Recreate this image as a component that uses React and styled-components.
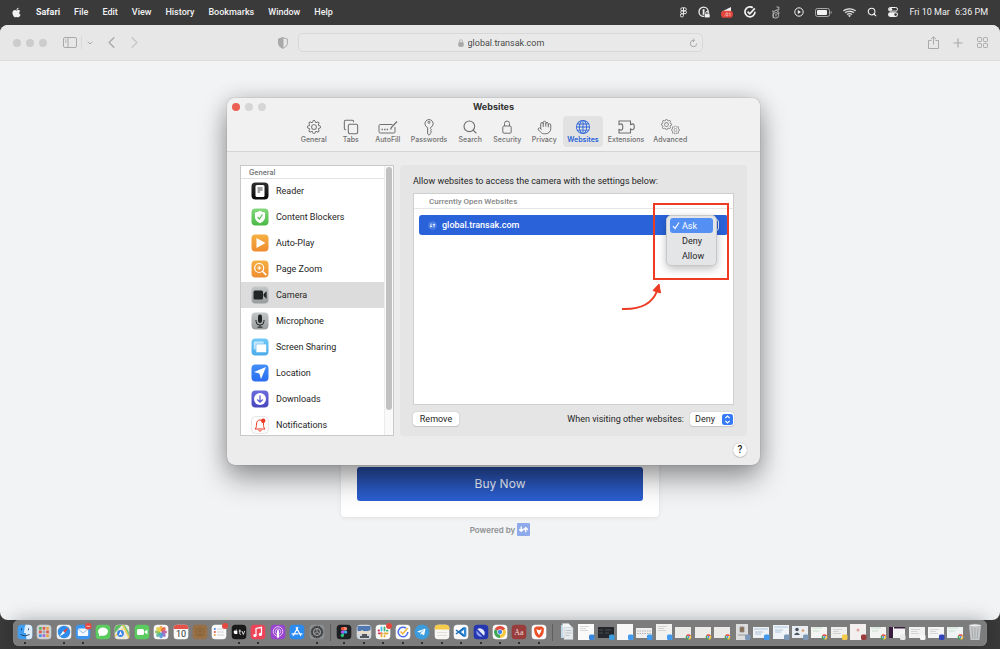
import React, { useState } from 'react';
import styled, { createGlobalStyle, css } from 'styled-components';
import { BsGear, BsGlobe, BsWifi } from 'react-icons/bs';
import { FaApple, FaTelegramPlane } from 'react-icons/fa';
import { Copy, Hand, Search, Plus, ChevronDown, ChevronLeft, ChevronRight } from 'lucide-react';

const colours = {
  desktop: '#3a3a3b',
  chrome: '#e7e7e7',
  page: '#f2f3f5',
  text: '#262626',
  primary: '#2962d9',
  danger: '#ee3b24',
};

const fonts = {
  body: 'Roboto, "Liberation Sans", sans-serif',
  heading: 'Inter, "Liberation Sans", sans-serif',
};

const GlobalStyle = createGlobalStyle`
  * {
    box-sizing: border-box;
  }

  body {
    margin: 0;
    background: ${colours.desktop};
    color: ${colours.text};
    font-family: ${fonts.body};
    font-size: 9px;
    line-height: 12px;
  }

  button, input, select {
    font: inherit;
    color: inherit;
    margin: 0;
    padding: 0;
    border: none;
    background: transparent;
    outline: none;
  }

  svg {
    display: block;
    flex: none;
  }
`;

const Desktop = styled.div`
  display: flex;
  flex-direction: column;
  min-height: 100vh;
`;

/* Menu bar */

const MenuBar = styled.header`
  display: flex;
  align-items: center;
  justify-content: space-between;
  height: 25px;
  padding: 0 12px 1px 11px;
  color: #f2f2f2;
`;

const MenuList = styled.nav`
  display: flex;
  align-items: center;
  gap: 14px;
`;

const MenuItem = styled.button`
  font-weight: ${props => (props.$strong ? 700 : 500)};
`;

const StatusList = styled.div`
  display: flex;
  align-items: center;
  gap: 11px;
`;

const Clock = styled.time`
  display: flex;
  gap: 5px;
`;

/* Browser window */

const BrowserWindow = styled.main`
  position: relative;
  flex: 1;
  display: flex;
  flex-direction: column;
  border-radius: 8px;
  overflow: hidden;
  background: ${colours.page};
`;

const Toolbar = styled.div`
  display: grid;
  grid-template-columns: 1fr minmax(0, 405px) 1fr;
  align-items: center;
  height: 36px;
  background: ${colours.chrome};
  border-bottom: 1px solid #dcdcdc;
  color: #a9a9a9;
`;

const ToolbarLeft = styled.div`
  display: flex;
  align-items: center;
  padding: 0 10px 0 13px;
`;

const ToolbarRight = styled.div`
  display: flex;
  align-items: center;
  justify-content: flex-end;
  gap: 12px;
  padding-right: 12px;
`;

const Lights = styled.div`
  display: flex;
  gap: 5px;
`;

const Light = styled.span`
  width: 8px;
  height: 8px;
  border-radius: 50%;
  background: ${props => props.$colour || '#cccccc'};
`;

const ToolGroup = styled.div`
  display: flex;
  align-items: center;
  gap: 4px;
  margin-left: ${props => (props.$wide ? 16 : 8)}px;
`;

const IconButton = styled.button`
  display: flex;
  align-items: center;
  justify-content: center;
`;

const Shield = styled.div`
  margin-left: auto;
`;

const AddressBar = styled.label`
  display: flex;
  align-items: center;
  height: 19px;
  padding: 0 4px;
  border: 1px solid #d8d8d8;
  border-radius: 5px;
  background: #e9e9e9;
`;

const AddressText = styled.span`
  flex: 1;
  display: flex;
  align-items: center;
  justify-content: center;
  gap: 4px;
  padding-left: 12px;
`;

const AddressInput = styled.input`
  width: 78px;
  color: #4a4a4a;
`;

/* Page behind the dialog */

const Page = styled.div`
  flex: 1;
  display: flex;
  flex-direction: column;
  align-items: center;
  padding-top: 340px;
`;

const Card = styled.section`
  display: flex;
  flex-direction: column;
  justify-content: flex-end;
  width: 318px;
  height: 116px;
  padding: 16px;
  border-radius: 4px;
  background: #fff;
  box-shadow: 0 1px 4px rgba(0, 0, 0, 0.08);
`;

const BuyButton = styled.button`
  height: 34px;
  border-radius: 3px;
  background: linear-gradient(#274a9f, #2b5fd3);
  color: #e9edf6;
  font-family: ${fonts.heading};
  font-size: 12px;
`;

const PoweredBy = styled.p`
  display: flex;
  align-items: center;
  gap: 2px;
  margin: 6px 0 0;
  color: #8d8f92;
  font-family: ${fonts.heading};
  font-size: 8px;
  font-weight: 600;
`;

/* Preferences dialog */

const Dialog = styled.section`
  position: absolute;
  top: 73px;
  left: 227px;
  width: 533px;
  border-radius: 8px;
  background: #ececec;
  box-shadow:
    0 0 1px rgba(0, 0, 0, 0.5),
    0 0 20px rgba(0, 0, 0, 0.16),
    0 14px 28px rgba(0, 0, 0, 0.36);
`;

const DialogHeader = styled.header`
  height: 54px;
  padding: 0 5px;
  border-bottom: 1px solid #d4d4d4;
  border-radius: 8px 8px 0 0;
  background: #f1f1f1;
  font-family: ${fonts.heading};
`;

const TitleRow = styled.div`
  display: grid;
  grid-template-columns: 1fr auto 1fr;
  align-items: center;
  height: 18px;
`;

const Title = styled.h1`
  margin: 0;
  color: #333;
  font-size: 9px;
  font-weight: 700;
`;

const Tabs = styled.div`
  display: flex;
  justify-content: center;
  gap: 1px;
`;

const Tab = styled.button`
  display: flex;
  flex-direction: column;
  align-items: center;
  justify-content: space-between;
  min-width: 36px;
  height: 31px;
  padding: 3px 4px;
  border-radius: 4px;
  color: #707070;
  font-size: 7px;
  font-weight: 500;
  line-height: 9px;
  ${props => props.$active && css`
    background: #e2e2e2;
    color: ${colours.primary};
    font-weight: 600;
  `}
`;

const TabIcon = styled.span`
  display: flex;
  align-items: center;
  height: 16px;
`;

const DialogBody = styled.div`
  display: grid;
  grid-template-columns: 154px 1fr;
  gap: 6px;
  padding: 13px 13px 7px;
`;

const Sidebar = styled.aside`
  display: flex;
  height: 271px;
  border: 1px solid #c9c9c9;
  background: #fff;
`;

const SidebarList = styled.div`
  flex: 1;
  overflow: hidden;
`;

const SidebarHeading = styled.h2`
  height: 12px;
  margin: 0;
  padding-left: 8px;
  box-shadow: 0 1px #e3e3e3;
  color: #777;
  font-family: ${fonts.heading};
  font-size: 7px;
  font-weight: 600;
  line-height: 13px;
`;

const SidebarItem = styled.button`
  display: flex;
  align-items: center;
  gap: 7px;
  width: 100%;
  height: 26px;
  padding-left: 10px;
  text-align: left;
  background: ${props => (props.$active ? '#dcdcdc' : 'transparent')};
`;

const Scrollbar = styled.div`
  width: 9px;
  padding: 1px;
  border-left: 1px solid #ececec;
  background: #fafafa;
`;

const Thumb = styled.div`
  height: 243px;
  border-radius: 3px;
  background: #c1c1c1;
`;

const Panel = styled.section`
  display: flex;
  flex-direction: column;
  padding: 10px 13px;
  border-radius: 4px;
  background: #e5e5e5;
`;

const Lead = styled.p`
  margin: 0;
`;

const SiteList = styled.div`
  flex: 1;
  margin: 6px 0 7px;
  border: 1px solid #cfcfcf;
  background: #fff;
`;

const SiteHeading = styled.h2`
  height: 15px;
  margin: 0 0 6px;
  padding: 2px 0 0 15px;
  border-bottom: 1px solid #e6e6e6;
  color: #858585;
  font-size: 8px;
  font-weight: 500;
`;

const SiteRow = styled.div`
  display: flex;
  align-items: center;
  gap: 5px;
  height: 20px;
  margin: 0 5px;
  padding: 0 9px;
  border-radius: 3px;
  background: ${colours.primary};
  color: #fff;
  font-weight: 500;
`;

const MenuAnchor = styled.div`
  position: relative;
  width: 51px;
  margin-left: auto;
  font-weight: 400;
`;

const SiteSelect = styled.button`
  display: block;
  width: 100%;
  height: 12px;
  border: 1px solid #dfe6f6;
  border-radius: 3px;
`;

const Menu = styled.div`
  position: absolute;
  top: -4px;
  right: 2px;
  width: 51px;
  padding: 2px 3px;
  border: 1px solid #c6c8ca;
  border-radius: 5px;
  background: #e3e5e6;
  box-shadow: 0 3px 8px rgba(0, 0, 0, 0.25);
`;

const Option = styled.button`
  display: grid;
  grid-template-columns: 12px 1fr;
  align-items: center;
  width: 100%;
  height: 15px;
  border-radius: 3px;
  text-align: left;
  color: ${props => (props.$selected ? '#fff' : colours.text)};
  background: ${props => (props.$selected ? '#5490f4' : 'transparent')};
`;

const OptionLabel = styled.span`
  grid-column: 2;
`;

const Annotation = styled.svg`
  position: absolute;
  top: -16px;
  right: -10px;
  width: 108px;
  height: 112px;
  pointer-events: none;
`;

const PanelFooter = styled.div`
  display: flex;
  align-items: center;
  justify-content: space-between;
`;

const RemoveButton = styled.button`
  width: 46px;
  height: 14px;
  border-radius: 3px;
  background: #fff;
  box-shadow: 0 0 1px rgba(0, 0, 0, 0.35), 0 1px 1px rgba(0, 0, 0, 0.1);
`;

const DefaultField = styled.label`
  display: flex;
  align-items: center;
  gap: 6px;
`;

const SelectBox = styled.span`
  display: flex;
  align-items: center;
  width: 44px;
  height: 14px;
  padding-right: 1px;
  border-radius: 3px;
  background: #fff;
  box-shadow: 0 0 1px rgba(0, 0, 0, 0.35), 0 1px 1px rgba(0, 0, 0, 0.1);
`;

const Select = styled.select`
  flex: 1;
  min-width: 0;
  padding-left: 5px;
  appearance: none;
`;

const DialogFooter = styled.footer`
  display: flex;
  justify-content: flex-end;
  padding: 0 13px 8px;
`;

const HelpButton = styled.button`
  width: 14px;
  height: 14px;
  border-radius: 50%;
  background: #fff;
  font-size: 10px;
  font-weight: 500;
  box-shadow: 0 0 1px rgba(0, 0, 0, 0.4), 0 1px 1px rgba(0, 0, 0, 0.12);
`;

/* Dock */

const Dock = styled.footer`
  position: relative;
  display: flex;
  justify-content: space-between;
  height: 26px;
  margin: 0 13px 3px;
  padding: 4px 4px 0;
  border-radius: 6px;
  background: #7c7c7c;
  box-shadow: inset 0 0 1px #b0b0b0, 0 0 18px rgba(0, 0, 0, 0.3);
`;

const DockItem = styled.div`
  display: flex;
  flex-direction: column;
  align-items: center;
  gap: 2px;
  width: 16px;
`;

const DockDivider = styled.div`
  display: flex;
  justify-content: center;
  width: 5px;
  height: 17px;

  &:after {
    content: '';
    width: 1px;
    background: #5e5e5e;
  }
`;

const Running = styled.span`
  width: 2px;
  height: 2px;
  border-radius: 50%;
  background: #161616;
`;

const DockSvg = styled.svg`
  width: 16px;
  height: 16px;
  overflow: visible;
`;

function LockIcon() {
  return (
    <svg width="6" height="8" viewBox="0 0 10 14" fill="none" stroke="currentColor" strokeWidth="1.3">
      <rect x="1" y="6" width="8" height="7" rx="1.2" fill="currentColor" />
      <path d="M2.6 6V3.6a2.4 2.4 0 0 1 4.8 0V6" />
    </svg>
  );
}

function TransakMark({ size }) {
  return (
    <svg width={size} height={size} viewBox="0 0 13 13">
      <rect width="13" height="13" rx="1" fill="#8faaeb" />
      <path d="M4.200 3.500v4.500M2.200 6.300l2 2 2.300-2.300M8.800 9.300V4.800M6.500 7l2.300-2.300 2 2" stroke="#fff" strokeWidth="1.400" fill="none" />
    </svg>
  );
}

const statusIcons = [
  <svg key="figma" width="7" height="11" viewBox="0 0 7 11" fill="none" stroke="currentColor" strokeWidth=".9">
    <path d="M3.5.8H2.2a1.5 1.5 0 0 0 0 3h1.3zM3.5.8h1.3a1.5 1.5 0 0 1 0 3H3.5zM3.5 3.8H2.2a1.5 1.5 0 0 0 0 3h1.3zM3.5 6.8H2.2a1.6 1.6 0 1 0 1.3 1.6z" />
    <circle cx="5" cy="5.3" r="1.5" />
  </svg>,
  <svg key="vault" width="12" height="12" viewBox="0 0 12 12">
    <circle cx="5.6" cy="5.8" r="4.6" fill="none" stroke="currentColor" strokeWidth="1.3" />
    <path d="M4.6 3.2h2v2.3l-.6.5.6.5v2.2h-2V6.4l.5-.5-.5-.5z" fill="currentColor" />
    <rect x="6.5" y="7.6" width="5.5" height="4.2" rx="1" fill="currentColor" stroke="#3a3a3b" strokeWidth=".6" />
    <path d="M7.8 7.6V6.7a1.4 1.4 0 0 1 2.8 0v.9" fill="none" stroke="currentColor" />
  </svg>,
  <svg key="alert" width="12" height="12" viewBox="0 0 12 12">
    <path d="M1 5.5 10 1v5H1z" fill="currentColor" />
    <rect y="4.8" width="12" height="7" rx="3.4" fill="#e2453c" />
    <path d="M3.2 9.8h.6M5 7h1.8v2.8H5zM8.2 7h.8v3" fill="none" stroke="#f6c6c1" strokeWidth=".7" />
  </svg>,
  <svg key="tick" width="12" height="12" viewBox="0 0 12 12" fill="none" stroke="currentColor" strokeWidth="1.7">
    <path d="M8.8 1.7A5 5 0 1 0 11 5.8" />
    <path d="m3.6 5.6 2.2 2.2 5-5.4" />
  </svg>,
  <svg key="beast" width="16" height="13" viewBox="-4 0 16 13" fill="none" stroke="#b9b9b9">
    <path d="M5.5 1h2.3v3H5.5L3.2 5.4 1 5M5.4 4.4 7.8 6v2" />
    <circle cx="4.8" cy="9.4" r="2.8" />
    <path d="M2.2 6.2v6M5 8v2.4" />
  </svg>,
  <svg key="play" width="10" height="10" viewBox="0 0 10 10">
    <circle cx="5" cy="5" r="4.2" fill="none" stroke="currentColor" />
    <path d="M3.8 3v4l3.2-2z" fill="currentColor" />
  </svg>,
  <svg key="battery" width="17" height="9" viewBox="0 0 17 9">
    <rect x=".5" y=".5" width="14" height="8" rx="2" fill="none" stroke="#a8a8a8" />
    <rect x="2" y="2" width="10" height="5" rx="1" fill="currentColor" />
    <path d="M15.6 3v3q1.1-.3 1.1-1.5T15.6 3" fill="#a8a8a8" />
  </svg>,
  <BsWifi key="wifi" size={13} strokeWidth=".5" />,
  <Search key="search" size={10} strokeWidth={2.6} />,
  <svg key="control" width="10" height="10" viewBox="0 0 10 10">
    <rect x=".5" y=".5" width="9" height="3.6" rx="1.8" fill="none" stroke="currentColor" />
    <circle cx="2.6" cy="2.3" r="1.5" fill="currentColor" />
    <rect y="5.3" width="10" height="4.6" rx="2.3" fill="currentColor" />
    <circle cx="7.6" cy="7.6" r="1.3" fill="#3a3a3b" />
  </svg>,
];

const tabs = [
  { label: 'General', icon: <BsGear size={14} /> },
  { label: 'Tabs', icon: <Copy size={16} strokeWidth={1.6} /> },
  {
    label: 'AutoFill',
    icon: (
      <svg width="20" height="15" viewBox="0 0 20 15" fill="none" stroke="currentColor">
        <path d="M14.5 4.5H2.2A1.2 1.2 0 0 0 1 5.7v6.1A1.2 1.2 0 0 0 2.2 13h13.6a1.2 1.2 0 0 0 1.2-1.2V7" />
        <path d="m12.5 9.5 1-2.2L19 1.5" strokeWidth="1.3" />
        <path d="M3.5 9.5h7" strokeDasharray="1.4 1.2" strokeWidth="1.3" />
      </svg>
    ),
  },
  {
    label: 'Passwords',
    icon: (
      <svg width="10" height="17" viewBox="0 0 10 17" fill="none" stroke="currentColor">
        <path d="M3.6 8.5A4.1 4.1 0 1 1 6.5 8.5v1.2l1 1-1 1.1 1 1.1-1.2 1.3v.7L5 16.2l-1.4-1.3z" />
        <circle cx="5" cy="3.3" r="1" />
      </svg>
    ),
  },
  { label: 'Search', icon: <Search size={16} strokeWidth={1.7} /> },
  { label: 'Security', icon: <svg width="10" height="14" viewBox="0 0 10 14" fill="none" stroke="currentColor"><rect x=".8" y="6" width="8.4" height="7.2" rx="1.2" /><path d="M2.5 6V3.5a2.5 2.5 0 0 1 5 0V6" /></svg> },
  { label: 'Privacy', icon: <Hand size={15} strokeWidth={1.6} /> },
  { label: 'Websites', icon: <BsGlobe size={14} /> },
  {
    label: 'Extensions',
    icon: (
      <svg width="17" height="14" viewBox="0 0 17 14" fill="none" stroke="currentColor" strokeWidth="1.1">
        <path d="M1 1h11.5v3.8c.5 0 .9-.9 2-.9 1.2 0 1.8 1 1.8 2.9s-.7 2.9-1.9 2.9c-1 0-1.4-.8-1.9-.8V13H1V9.4c.8 0 1 .8 2 .8 1.200 0 1.800-.9 1.800-3.200S4.200 3.900 3 3.900c-1 0-1.300.8-2 .8z" />
      </svg>
    ),
  },
  {
    label: 'Advanced',
    icon: (
      <svg width="20" height="16" viewBox="0 0 20 16" stroke="currentColor" strokeWidth=".3">
        <BsGear size={11} x="1" />
        <BsGear size={9} x="11" y="6.500" />
      </svg>
    ),
  },
];

function Tile({ id, from, to, stroke, children }) {
  return (
    <svg width="18" height="18" viewBox="0 0 18 18">
      <defs>
        <linearGradient id={id} x2="0" y2="1">
          <stop stopColor={from} />
          <stop offset="1" stopColor={to} />
        </linearGradient>
      </defs>
      <rect x=".5" y=".5" width="17" height="17" rx="4" fill={`url(#${id})`} stroke={stroke || 'none'} strokeWidth=".6" />
      {children}
    </svg>
  );
}

const categories = [
  {
    label: 'Reader',
    icon: (
      <Tile id="reader" from="#303030" to="#080808">
        <rect x="4.500" y="3" width="9" height="12" rx="1.500" fill="#fff" />
        <path d="M6.500 6h5M6.500 8h5M6.500 10h2.500" stroke="#333" strokeWidth=".9" />
      </Tile>
    ),
  },
  {
    label: 'Content Blockers',
    icon: (
      <Tile id="blockers" from="#84da7c" to="#4bb848">
        <path d="M9 2.800q2.400 1.700 5 1.700v4.500q0 4-5 6.300-5-2.300-5-6.300V4.500q2.600 0 5-1.700" fill="#fff" />
        <path d="m6.600 9 1.800 2 3-4.500" fill="none" stroke="#55bf51" strokeWidth="1.200" />
      </Tile>
    ),
  },
  {
    label: 'Auto-Play',
    icon: <Tile id="autoplay" from="#f6b043" to="#ee8c2e"><path d="M5.500 4v10l9-5z" fill="#fff" /></Tile>,
  },
  {
    label: 'Page Zoom',
    icon: (
      <Tile id="zoom" from="#f6b043" to="#ee8c2e">
        <circle cx="8.200" cy="8" r="4.500" fill="none" stroke="#fff" strokeWidth="1.200" />
        <path d="M8.200 6v4M6.200 8h4" stroke="#fff" strokeWidth="1.100" />
        <path d="m11.500 11.300 3.300 3.300" stroke="#fff" strokeWidth="1.600" strokeLinecap="round" />
      </Tile>
    ),
  },
  {
    label: 'Camera',
    icon: (
      <Tile id="camera" from="#c5c8c9" to="#999c9d">
        <rect x="2.500" y="4.500" width="9.500" height="9" rx="1.500" fill="#232425" />
        <path d="m12.600 8 3-2.800v7.600l-3-2.800z" fill="#232425" />
      </Tile>
    ),
  },
  {
    label: 'Microphone',
    icon: (
      <Tile id="microphone" from="#c5c8c9" to="#999c9d">
        <rect x="7" y="2.500" width="4" height="8.500" rx="2" fill="#232425" />
        <path d="M5 8v1.200a4 4 0 0 0 8 0V8M9 13.200V15M6.500 15.200h5" fill="none" stroke="#232425" />
      </Tile>
    ),
  },
  {
    label: 'Screen Sharing',
    icon: (
      <Tile id="sharing" from="#72c9f7" to="#4cabea">
        <rect x="2.800" y="3.500" width="10" height="8" rx="1.200" fill="#c3e7fb" />
        <rect x="5" y="6" width="10.500" height="8.500" rx="1.200" fill="#fff" stroke="#62bcf2" strokeWidth=".7" />
      </Tile>
    ),
  },
  {
    label: 'Location',
    icon: <Tile id="location" from="#438ff7" to="#2a6df0"><path d="M15 3 10 15l-1.600-5.400L3 8z" fill="#fff" /></Tile>,
  },
  {
    label: 'Downloads',
    icon: (
      <Tile id="downloads" from="#6c6bdc" to="#4947bd">
        <circle cx="9" cy="9" r="6" fill="#fff" />
        <path d="M9 5.500v6.500M6.300 9.500 9 12.200l2.700-2.700" fill="none" stroke="#5655cb" strokeWidth="1.200" />
      </Tile>
    ),
  },
  {
    label: 'Notifications',
    icon: (
      <Tile id="notifications" from="#fff" to="#fafafa" stroke="#d8d8d8">
        <path d="M4 13h10c-1.500-1.300-1.500-3-1.500-5 0-2.500-1.500-4-3.500-4S5.500 5.500 5.500 8c0 2 0 3.700-1.500 5zM7.500 14.500q1.500 1.300 3 0" fill="none" stroke={colours.danger} />
        <circle cx="12.200" cy="4.800" r="2.200" fill={colours.danger} />
      </Tile>
    ),
  },
];

function AppIcon({ fill, children }) {
  return (
    <DockSvg viewBox="0 0 16 16">
      <rect x=".7" y=".7" width="14.600" height="14.600" rx="3.600" fill={fill} />
      {children}
    </DockSvg>
  );
}

const petals = ['#f3a33b', '#e9603f', '#c158a0', '#8a6fc4', '#4e95dc', '#51b59a', '#86c159', '#e6cf3e'];
const padColours = ['#5bb55a', '#e2574c', '#f0a33b', '#e2574c', '#a9abb0', '#e2574c', '#4a90e2', '#a36bd0', '#f0a33b'];

function ChromeLogo({ x, y, r }) {
  return (
    <g transform={`translate(${x} ${y}) scale(${r})`}>
      <path d="M0 0-.87-.5A1 1 0 0 1 .87-.5z" fill="#e14a3d" />
      <path d="M0 0 .87-.5A1 1 0 0 1 0 1z" fill="#f6c83c" />
      <path d="M0 0 0 1A1 1 0 0 1-.87-.5z" fill="#3fa557" />
      <circle r=".46" fill="#fff" />
      <circle r=".36" fill="#4484ee" />
    </g>
  );
}

const apps = [
  {
    name: 'finder',
    running: true,
    icon: (
      <AppIcon fill="#3f9df2">
        <path d="M8.500 .7H11.700a3.600 3.600 0 0 1 3.600 3.600v7.400a3.600 3.600 0 0 1-3.600 3.600H9.500Q8.800 12 9 9H7Q7 4 8.500.7" fill="#dfeefb" />
        <path d="M4.500 4.500v1.700M11.500 4.500v1.700M3.500 10.500q4.500 3 9 0" stroke="#1c3a5c" fill="none" strokeWidth=".9" />
      </AppIcon>
    ),
  },
  {
    name: 'launchpad',
    icon: (
      <AppIcon fill="#cfd1d4">
        {padColours.map((fill, i) => (
          <rect key={i} x={3 + (i % 3) * 3.6} y={3 + Math.floor(i / 3) * 3.6} width="2.700" height="2.700" rx=".6" fill={fill} />
        ))}
      </AppIcon>
    ),
  },
  {
    name: 'safari',
    running: true,
    icon: (
      <AppIcon fill="#eef0f2">
        <circle cx="8" cy="8" r="6.200" fill="#2e8ceb" />
        <path d="M12.500 3.500 9 9 7 7z" fill="#e8483d" />
        <path d="M3.500 12.500 7 7l2 2z" fill="#fff" />
      </AppIcon>
    ),
  },
  {
    name: 'mail',
    running: true,
    icon: (
      <AppIcon fill="#3a94f0">
        <rect x="2.800" y="4.500" width="10.400" height="7.500" rx="1" fill="#f5f9fd" />
        <path d="m3 5 5 4 5-4" fill="none" stroke="#7cb0e5" strokeWidth=".8" />
        <rect x="10" y="-1" width="6.500" height="6.500" rx="3" fill="#e6483f" />
        <path d="M11.500 2.300h3.600" stroke="#f7c9c5" strokeWidth="1.300" strokeDasharray="1 .3" />
      </AppIcon>
    ),
  },
  {
    name: 'messages',
    icon: (
      <AppIcon fill="#5bcb5f">
        <ellipse cx="8" cy="7.600" rx="5" ry="4.200" fill="#fff" />
        <path d="m4.500 9.500-.5 3 3-1.500z" fill="#fff" />
      </AppIcon>
    ),
  },
  {
    name: 'maps',
    icon: (
      <AppIcon fill="#e9ecdf">
        <path d="M1 9V4q0-3 3-3h4z" fill="#62bd66" />
        <path d="M8 1h3l4 7v5z" fill="#7ec97a" />
        <path d="m9 1 6 13M1 12 9 5" stroke="#f5cf55" strokeWidth="1.500" />
        <circle cx="6.500" cy="9.500" r="3.400" fill="#3b82e8" />
        <path d="m6.500 7 1.800 4.500-1.800-1-1.800 1z" fill="#fff" />
      </AppIcon>
    ),
  },
  {
    name: 'facetime',
    icon: (
      <AppIcon fill="#5bcb5f">
        <rect x="3" y="5" width="7" height="6" rx="1.500" fill="#fff" />
        <path d="m10.600 7.500 2.800-2v5l-2.800-2z" fill="#fff" />
      </AppIcon>
    ),
  },
  {
    name: 'photos',
    icon: (
      <AppIcon fill="#f7f7f7">
        {petals.map((fill, i) => (
          <ellipse key={fill} cx="8" cy="4.600" rx="1.800" ry="2.800" fill={fill} opacity=".9" transform={`rotate(${i * 45} 8 8)`} />
        ))}
      </AppIcon>
    ),
  },
  {
    name: 'calendar',
    icon: (
      <AppIcon fill="#fafafa">
        <path d="M.7 5V4.300A3.600 3.600 0 0 1 4.300.7h7.400a3.600 3.600 0 0 1 3.600 3.600V5z" fill="#e4524a" />
        <text x="8" y="13" textAnchor="middle" fontSize="9" fill="#333">10</text>
      </AppIcon>
    ),
  },
  {
    name: 'contacts',
    icon: (
      <AppIcon fill="#987046">
        <circle cx="8" cy="8" r="4" fill="none" stroke="#876139" />
        <circle cx="8" cy="7" r="1.500" fill="#876139" />
        <path d="M5.500 10.500q2.500-2.500 5 0" fill="#876139" />
      </AppIcon>
    ),
  },
  {
    name: 'reminders',
    icon: (
      <AppIcon fill="#fafafa">
        <path d="M6 5h7M6 8h7M6 11h7" stroke="#c7c7c7" strokeWidth=".8" />
        <circle cx="3.800" cy="5" r="1" fill="#3b82e8" />
        <circle cx="3.800" cy="8" r="1" fill="#e6483f" />
        <circle cx="3.800" cy="11" r="1" fill="#f0a33b" />
        <circle cx="14" cy="2" r="3" fill="#e6483f" />
      </AppIcon>
    ),
  },
  {
    name: 'tv',
    running: true,
    icon: (
      <AppIcon fill="#19191a">
        <FaApple x="2" y="5" size={5.5} color="#fff" />
        <path d="M8.800 5.500v4.200q0 .8 1 .8M7.800 7h2.300M11 7l1.300 3.500L13.700 7" fill="none" stroke="#fff" strokeWidth=".8" />
      </AppIcon>
    ),
  },
  {
    name: 'music',
    running: true,
    icon: (
      <AppIcon fill="#ee4459">
        <path d="M6 11.500V4.500l5.500-1.200v7" fill="none" stroke="#fff" strokeWidth="1.200" />
        <circle cx="4.900" cy="11.500" r="1.600" fill="#fff" />
        <circle cx="10.400" cy="10.400" r="1.600" fill="#fff" />
      </AppIcon>
    ),
  },
  {
    name: 'podcasts',
    icon: (
      <AppIcon fill="#9a45cf">
        <circle cx="8" cy="7.500" r="4.800" fill="none" stroke="#e9d4f7" strokeWidth=".9" />
        <circle cx="8" cy="7.500" r="2.700" fill="none" stroke="#e9d4f7" strokeWidth=".8" />
        <path d="M8 7v6" stroke="#fff" strokeWidth="2" strokeLinecap="round" />
      </AppIcon>
    ),
  },
  {
    name: 'store',
    icon: (
      <AppIcon fill="#2b8bf1">
        <path d="m8.800 3.500-4.500 8M7.200 3.500l4.500 8M3 9.800h6M11 9.800h2" fill="none" stroke="#fff" strokeWidth="1.200" strokeLinecap="round" />
      </AppIcon>
    ),
  },
  {
    name: 'settings',
    running: true,
    icon: (
      <AppIcon fill="#8e9193">
        <circle cx="8" cy="8" r="5.500" fill="#4a4b4d" stroke="#303132" strokeDasharray="1 .7" strokeWidth="1.500" />
        <circle cx="8" cy="8" r="3.500" fill="none" stroke="#a5a7a9" />
        <path d="M8 8V4M8 8l-3.500 2M8 8l3.500 2" stroke="#a5a7a9" strokeWidth=".8" />
      </AppIcon>
    ),
  },
];

const openApps = [
  {
    name: 'figma',
    icon: (
      <AppIcon fill="#1e1f22">
        <path d="M8 3H6.500a1.700 1.700 0 0 0 0 3.400H8z" fill="#e9573f" />
        <path d="M8 3h1.500a1.700 1.700 0 0 1 0 3.400H8z" fill="#ff8a73" />
        <path d="M8 6.400H6.500a1.700 1.700 0 0 0 0 3.400H8z" fill="#a259ff" />
        <circle cx="9.600" cy="8.100" r="1.700" fill="#31b2f2" />
        <path d="M8 9.800H6.500A1.700 1.700 0 1 0 8 11.500z" fill="#2bc37c" />
      </AppIcon>
    ),
  },
  {
    name: 'preview',
    icon: (
      <AppIcon fill="#cfd6df">
        <rect x="1.500" y="2" width="13" height="5" fill="#5079b4" />
        <path d="M1.500 9 6 6l3 2 5.500-2v4h-13z" fill="#e8ddc8" />
        <path d="M4 13h9M6 11h5" stroke="#54585e" strokeWidth="2" />
      </AppIcon>
    ),
  },
  {
    name: 'slack',
    icon: (
      <AppIcon fill="#fafafa">
        <g strokeWidth="1.800" strokeLinecap="round">
          <path d="M6.500 3.500v3" stroke="#42c0ea" />
          <path d="M3.500 6.500h.6M3.700 9.300h3" stroke="#dd3560" />
          <path d="M9.500 3.500v3M12.500 6.700h-.6" stroke="#41b27c" />
          <path d="M9.300 9.500h3.200M9.500 12.500v-.6M6.500 9.500v3" stroke="#e7ae38" />
        </g>
        <circle cx="14" cy="2" r="3" fill="#e6483f" />
      </AppIcon>
    ),
  },
  {
    name: 'ticktick',
    icon: (
      <AppIcon fill="#fafafa">
        <path d="M11 4.200A4.800 4.800 0 1 0 12.800 8" fill="none" stroke="#4b70ee" strokeWidth="1.500" />
        <path d="m5.500 7.500 2.200 2.200 5-5.500" fill="none" stroke="#f2b63c" strokeWidth="1.500" />
      </AppIcon>
    ),
  },
  {
    name: 'telegram',
    icon: (
      <DockSvg viewBox="0 0 16 16">
        <circle cx="8" cy="8" r="7.500" fill="#3d9cdb" />
        <FaTelegramPlane x="3" y="3.500" size={9} color="#fff" />
      </DockSvg>
    ),
  },
  {
    name: 'notes',
    icon: (
      <AppIcon fill="#f7f6f2">
        <path d="M.7 5.500V4.300A3.600 3.600 0 0 1 4.300.7h7.400a3.600 3.600 0 0 1 3.600 3.600v1.200z" fill="#f5cb4b" />
        <path d="M3 8.500h10M3 11.500h10" stroke="#d8d6d0" strokeWidth=".7" />
      </AppIcon>
    ),
  },
  {
    name: 'code',
    icon: (
      <AppIcon fill="#fafafa">
        <path d="m11 2.700 2.300 1v8.600l-2.300 1L5.500 8z" fill="#2f8ad6" />
        <path d="M11 5.800 8 8l3 2.200z" fill="#fafafa" />
        <path d="m3 6 7.500 5.800M3 10l7.500-5.800" stroke="#1b6cb5" strokeWidth="1.500" />
      </AppIcon>
    ),
  },
  {
    name: 'linear',
    icon: (
      <AppIcon fill="#2537b0">
        <path d="M4.200 5A5 5 0 0 1 11 11.800z" fill="#e6eafd" />
        <path d="m3.400 6.600 6 6a5 5 0 0 1-6-6" fill="#8f9ff0" />
      </AppIcon>
    ),
  },
  { name: 'chrome', icon: <AppIcon fill="#fafafa"><ChromeLogo x={8} y={8} r={6} /></AppIcon> },
  {
    name: 'dictionary',
    icon: (
      <AppIcon fill="#983c3c">
        <text x="8" y="11" textAnchor="middle" fontSize="8" fontFamily="Liberation Serif, serif" fill="#f1dcdc">Aa</text>
      </AppIcon>
    ),
  },
  {
    name: 'brave',
    icon: (
      <AppIcon fill="#fafafa">
        <path d="M5 2.500h6l2 2-.5 4.500-1.500 3L8 14l-3-2-1.500-3L3 4.500z" fill="#ec5029" />
        <path d="M5.300 5.300 8 6.300l2.700-1-1 3L8 11 6.300 8.300z" fill="#fff" />
      </AppIcon>
    ),
  },
];

// [name, top, height, paper colour, badge, drawing]
const windows = [
  ['files', 1, 14, '#e8ecef', null, 'stack'],
  ['mail window', 0, 16, '#fafafa', '#3a86dd', 'lines'],
  ['telegram window', 3, 11, '#24272b', '#3d9cdb', 'dark'],
  ['empty window', 0, 16, '#f7f7f7', '#419af0', null],
  ['keyboard window', 4, 10, '#efefef', '#419af0', 'keys'],
  ['finder window', 0, 16, '#f1f1ef', '#419af0', 'lines'],
  ['tab one', 3, 11, '#ecebe8', 'chrome', null],
  ['tab two', 3, 11, '#ecebe8', 'chrome', null],
  ['tab three', 3, 11, '#ecebe8', 'chrome', null],
  ['portrait', 0, 16, '#dcdcdc', '#7d98b9', 'portrait'],
  ['folder', 3, 11, '#eef1f4', '#419af0', 'blue'],
  ['document', 1, 14, '#eff3f8', '#7d98b9', 'blue'],
  ['people', 2, 12, '#e9edf1', '#7d98b9', 'people'],
  ['sheet', 3, 11, '#f4f4f3', 'chrome', 'green'],
  ['note', 3, 11, '#efefed', '#f5cb4b', 'lines'],
  ['dictionary window', 0, 16, '#f3efee', '#983c3c', 'seal'],
  ['tab four', 3, 11, '#f3f3f1', 'chrome', 'green'],
  ['slack window', 3, 11, '#f3f3f3', '#e8e8e8', 'side'],
  ['task window', 3, 11, '#f1f1f1', '#f7f7f7', 'lines'],
  ['linear window', 3, 11, '#f4f4f4', '#3143b8', 'lines'],
  ['tab five', 3, 11, '#f0f3f3', 'chrome', 'green'],
];

function WindowThumb({ top, height, paper, badge, drawing }) {
  if (drawing === 'stack') {
    return (
      <DockSvg viewBox="0 0 16 16">
        <path d="M2 1h8l4 3v10H2z" fill="#b9d9f0" />
        <path d="M3.500-.5h6l3 3V13h-9z" fill="#f2f4f5" stroke="#c3ccd3" strokeWidth=".5" />
        <path d="M5 3.500h9v12H5z" fill="#e6eaed" stroke="#b9c3ca" strokeWidth=".5" />
        <path d="M6.500 6.500h6M6.500 9h6M6.500 11.500h4" stroke="#a9b4bc" strokeWidth=".7" />
      </DockSvg>
    );
  }

  return (
    <DockSvg viewBox="0 0 16 16">
      <rect x={drawing === 'portrait' ? 2 : 0} y={top} width={drawing === 'portrait' ? 12 : 16} height={height} fill={paper} />
      {drawing === 'lines' && <path d={`M2 ${top + 2.5}h9M2 ${top + 4.5}h6M2 ${top + 6.5}h8`} stroke="#c4c6c9" strokeWidth=".7" />}
      {drawing === 'blue' && <path d={`M1 ${top + 2}h14M2 ${top + 5}h8M2 ${top + 7}h6`} stroke="#9db7d6" strokeWidth=".8" />}
      {drawing === 'green' && <path d={`M1 ${top + 1}h10M2 ${top + 4}h6`} stroke="#b5d6ba" strokeWidth=".7" />}
      {drawing === 'dark' && <path d={`M1 ${top + 3}h4M7 ${top + 3}h6M1 ${top + 6}h4M7 ${top + 6}h4`} stroke="#4e5359" strokeWidth=".9" />}
      {drawing === 'keys' && <path d="M1 7h14M1 9.500h14" stroke="#b1b1b1" strokeDasharray="1.500 1" strokeWidth="1.200" />}
      {drawing === 'side' && <path d={`M0 ${top}h4v${height}h-4zM5 ${top}h11v1.500h-11z`} fill="#3a1c3e" />}
      {drawing === 'seal' && <circle cx="8" cy="6" r="1.500" fill="#dfa39c" />}
      {drawing === 'portrait' && <path d="M6 3h4v5H6zM4 11h8" fill="#8a6e50" stroke="#8c8c8c" strokeWidth=".8" />}
      {drawing === 'people' && (
        <g fill="#495463">
          <circle cx="5" cy="5.500" r="1.800" />
          <path d="M2 11q3-5 6 0z" />
          <circle cx="11" cy="6.500" r="1.300" fill="#d99c6a" />
        </g>
      )}
      {badge === 'chrome' && <ChromeLogo x={13.5} y={13} r={2.8} />}
      {badge && badge !== 'chrome' && <rect x="11" y="10.500" width="5.500" height="5.500" rx="1.500" fill={badge} />}
    </DockSvg>
  );
}

export default function App() {
  const [tab, setTab] = useState('Websites');
  const [category, setCategory] = useState('Camera');
  const [permission, setPermission] = useState('Ask');

  return (
    <Desktop>
      <GlobalStyle />
      <MenuBar>
        <MenuList>
          <FaApple size={11} />
          <MenuItem $strong>Safari</MenuItem>
          {['File', 'Edit', 'View', 'History', 'Bookmarks', 'Window', 'Help'].map(item => (
            <MenuItem key={item}>{item}</MenuItem>
          ))}
        </MenuList>
        <StatusList>
          {statusIcons}
          <Clock><span>Fri 10 Mar</span><span>6:36 PM</span></Clock>
        </StatusList>
      </MenuBar>

      <BrowserWindow>
        <Toolbar>
          <ToolbarLeft>
            <Lights><Light /><Light /><Light /></Lights>
            <ToolGroup $wide>
              <IconButton aria-label="Show sidebar">
                <svg width="14" height="11" viewBox="0 0 14 11" fill="none" stroke="currentColor">
                  <rect x=".5" y=".5" width="13" height="10" rx="1.500" />
                  <path d="M5 .5v10M2 3h1.500M2 5h1.500" />
                </svg>
              </IconButton>
              <svg width="1" height="13"><path d="M.5 0v13" stroke="#d9d9d9" /></svg>
              <IconButton aria-label="Tab groups"><ChevronDown size={8} strokeWidth={3} /></IconButton>
            </ToolGroup>
            <ToolGroup>
              <IconButton aria-label="Back"><ChevronLeft size={19} strokeWidth={1.7} /></IconButton>
              <IconButton aria-label="Forward"><ChevronRight size={19} strokeWidth={1.7} color="#c6c6c6" /></IconButton>
            </ToolGroup>
            <Shield>
              <svg width="10" height="12" viewBox="0 0 10 12" fill="none" stroke="currentColor">
                <path d="M5 .7 9.400 2v4.500Q9.400 9.600 5 11.300.6 9.600.6 6.500V2z" />
                <path d="M5 .7v10.600Q.6 9.600.6 6.500V2z" fill="currentColor" />
              </svg>
            </Shield>
          </ToolbarLeft>
          <AddressBar>
            <AddressText>
              <LockIcon />
              <AddressInput aria-label="Address" defaultValue="global.transak.com" />
            </AddressText>
            <IconButton aria-label="Reload">
              <svg width="9" height="10" viewBox="0 0 9 10" fill="none" stroke="currentColor">
                <path d="M5 2.300A3.200 3.200 0 1 0 7.700 5.500M3.800.5 5.700 2.300 3.800 4.200" />
              </svg>
            </IconButton>
          </AddressBar>
          <ToolbarRight>
            <IconButton aria-label="Share">
              <svg width="11" height="13" viewBox="0 0 11 13" fill="none" stroke="currentColor">
                <path d="M3.500 4.500h-3v8h10v-8h-3M5.500 8.500V1M3 3.200 5.500.800 8 3.200" />
              </svg>
            </IconButton>
            <IconButton aria-label="New tab"><Plus size={14} strokeWidth={2} /></IconButton>
            <IconButton aria-label="Tab overview">
              <svg width="11" height="11" viewBox="0 0 11 11" fill="none" stroke="currentColor">
                <rect x=".5" y=".5" width="4" height="4" rx=".8" />
                <rect x="6.500" y=".5" width="4" height="4" rx=".8" />
                <rect x=".5" y="6.500" width="4" height="4" rx=".8" />
                <rect x="6.500" y="6.500" width="4" height="4" rx=".8" />
              </svg>
            </IconButton>
          </ToolbarRight>
        </Toolbar>

        <Page>
          <Card><BuyButton>Buy Now</BuyButton></Card>
          <PoweredBy>Powered by <TransakMark size={13} /></PoweredBy>
        </Page>

        <Dialog aria-label="Websites">
          <DialogHeader>
            <TitleRow>
              <Lights><Light $colour="#ec5f55" /><Light $colour="#d6d6d6" /><Light $colour="#d6d6d6" /></Lights>
              <Title>Websites</Title>
            </TitleRow>
            <Tabs>
              {tabs.map(({ label, icon }) => (
                <Tab key={label} $active={label === tab} onClick={() => setTab(label)}>
                  <TabIcon>{icon}</TabIcon>
                  {label}
                </Tab>
              ))}
            </Tabs>
          </DialogHeader>

          <DialogBody>
            <Sidebar>
              <SidebarList>
                <SidebarHeading>General</SidebarHeading>
                {categories.map(({ label, icon }) => (
                  <SidebarItem key={label} $active={label === category} onClick={() => setCategory(label)}>
                    {icon}
                    {label}
                  </SidebarItem>
                ))}
              </SidebarList>
              <Scrollbar><Thumb /></Scrollbar>
            </Sidebar>

            <Panel>
              <Lead>Allow websites to access the camera with the settings below:</Lead>
              <SiteList>
                <SiteHeading>Currently Open Websites</SiteHeading>
                <SiteRow>
                  <svg width="9" height="9" viewBox="0 0 9 9">
                    <circle cx="4.500" cy="4.500" r="4.500" fill="#4479e2" />
                    <path d="M3 2.500v3.500M1.800 5 3 6.200 4.200 5M6 6.300V3M4.800 4 6 2.800 7.200 4" stroke="#fff" fill="none" strokeWidth=".9" />
                  </svg>
                  global.transak.com
                  <MenuAnchor>
                    <SiteSelect aria-label="Camera permission" />
                    <Menu role="listbox">
                      {['Ask', 'Deny', 'Allow'].map(option => (
                        <Option
                          key={option}
                          role="option"
                          aria-selected={option === permission}
                          $selected={option === permission}
                          onClick={() => setPermission(option)}>
                          {option === permission && (
                            <svg width="12" height="9" viewBox="0 0 12 9">
                              <path d="m3 5 2 2.500L9 1.500" fill="none" stroke="#fff" strokeWidth="1.200" />
                            </svg>
                          )}
                          <OptionLabel>{option}</OptionLabel>
                        </Option>
                      ))}
                    </Menu>
                    <Annotation viewBox="0 0 108 112" fill="none" stroke={colours.danger} strokeWidth="2">
                      <rect x="33" y="1" width="74" height="75" />
                      <path d="M1 106Q29 107 36 88" />
                      <path d="m38 81-6 6.500 7.500 2.500z" fill={colours.danger} strokeWidth="1" />
                    </Annotation>
                  </MenuAnchor>
                </SiteRow>
              </SiteList>
              <PanelFooter>
                <RemoveButton>Remove</RemoveButton>
                <DefaultField>
                  When visiting other websites:
                  <SelectBox>
                    <Select defaultValue="Deny">
                      <option>Ask</option>
                      <option>Deny</option>
                      <option>Allow</option>
                    </Select>
                    <svg width="11" height="11" viewBox="0 0 11 11">
                      <rect width="11" height="11" rx="2.500" fill="#3579f6" />
                      <path d="m3.300 4.200 2.200-2.200 2.200 2.200M3.300 6.800 5.500 9l2.200-2.200" fill="none" stroke="#fff" strokeWidth="1.200" />
                    </svg>
                  </SelectBox>
                </DefaultField>
              </PanelFooter>
            </Panel>
          </DialogBody>
          <DialogFooter><HelpButton aria-label="Help">?</HelpButton></DialogFooter>
        </Dialog>
      </BrowserWindow>

      <Dock>
        {apps.map(({ name, icon, running }) => (
          <DockItem key={name}>{icon}{running && <Running />}</DockItem>
        ))}
        <DockDivider />
        {openApps.map(({ name, icon }) => (
          <DockItem key={name}>{icon}<Running /></DockItem>
        ))}
        <DockDivider />
        {windows.map(([name, top, height, paper, badge, drawing]) => (
          <DockItem key={name}>
            <WindowThumb top={top} height={height} paper={paper} badge={badge} drawing={drawing} />
          </DockItem>
        ))}
        <DockItem>
          <DockSvg viewBox="0 0 16 16">
            <path d="M2 1h12l-1.500 15h-9z" fill="#c6c8c9" />
            <ellipse cx="8" cy="1.500" rx="6" ry="1.500" fill="#e9eaeb" stroke="#999" strokeWidth=".5" />
            <path d="m5 4 .8 11M8 4v11M11 4l-.8 11" stroke="#9fa2a4" strokeWidth=".8" />
          </DockSvg>
        </DockItem>
      </Dock>
    </Desktop>
  );
}
